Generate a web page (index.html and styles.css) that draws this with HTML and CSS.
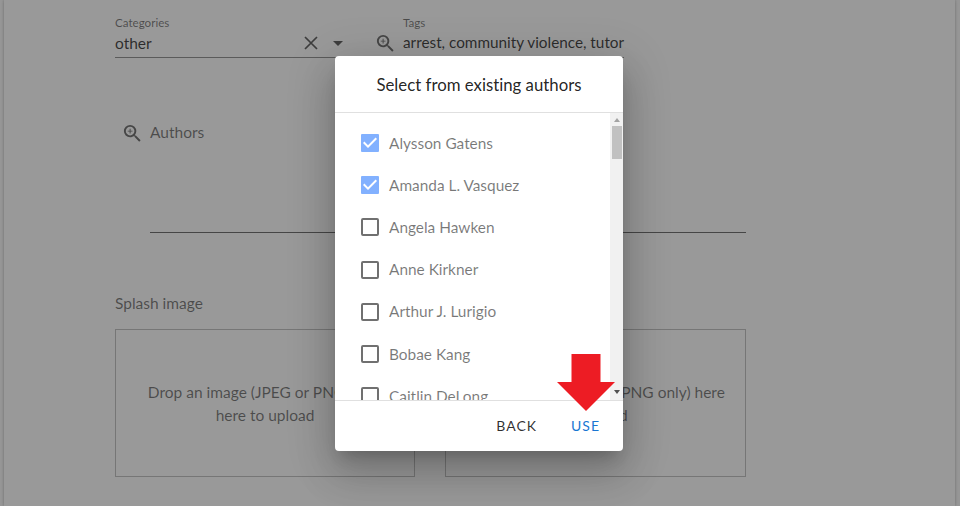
FILE: index.html
```html
<!DOCTYPE html>
<html lang="en">
<head>
<meta charset="utf-8">
<title>Select from existing authors</title>
<link rel="stylesheet" href="styles.css">
</head>
<body>
<svg class="defs" aria-hidden="true">
  <symbol id="zoom-in" viewBox="0 0 24 24"><path d="M15.5 14h-.79l-.28-.27A6.47 6.47 0 0 0 16 9.5 6.5 6.5 0 1 0 9.5 16c1.61 0 3.09-.59 4.23-1.57l.27.28v.79l5 4.99L20.49 19l-4.99-5zm-6 0C7.01 14 5 11.99 5 9.5S7.01 5 9.5 5 14 7.01 14 9.5 11.99 14 9.5 14zm2.5-4h-2v2H9v-2H7V9h2V7h1v2h2v1z"/></symbol>
  <symbol id="box-on" viewBox="3 3 18 18"><path d="M20 3H4a1 1 0 0 0-1 1v16a1 1 0 0 0 1 1h16a1 1 0 0 0 1-1V4a1 1 0 0 0-1-1zM10 17l-5-5 1.41-1.41L10 14.17l7.59-7.59L19 8l-9 9z"/></symbol>
</svg>
<main class="page">
  <div class="fields">
    <div class="field categories">
      <span class="caption">Categories</span>
      <div class="value"><span class="txt">other</span>
        <svg class="clear" viewBox="0 0 14 14"><path d="M1 1l12 12M13 1L1 13"/></svg>
        <svg class="caret" viewBox="0 0 10 5"><path d="M0 0h10L5 5z"/></svg>
      </div>
    </div>
    <svg class="icon tag-icon"><use href="#zoom-in"/></svg>
    <div class="field tags">
      <span class="caption">Tags</span>
      <div class="value"><span class="txt">arrest, community violence, tutor</span></div>
    </div>
  </div>
  <div class="authors">
    <svg class="icon"><use href="#zoom-in"/></svg>
    <div class="authors-input">Authors</div>
  </div>
  <div class="splash">Splash image</div>
  <div class="drops">
    <div class="drop"><span>Drop an image (JPEG or PNG only)</span><span>here to upload</span></div>
    <div class="drop"><span class="prompt">Drop an image (JPEG or PNG only) here</span><span>to upload</span></div>
  </div>
</main>
<div class="overlay">
  <section class="dialog">
    <h1 class="title">Select from existing authors</h1>
    <div class="body">
      <ul class="list">
        <li class="row"><svg class="check"><use href="#box-on"/></svg>Alysson Gatens</li>
        <li class="row"><svg class="check"><use href="#box-on"/></svg>Amanda L. Vasquez</li>
        <li class="row"><span class="box"></span>Angela Hawken</li>
        <li class="row"><span class="box"></span>Anne Kirkner</li>
        <li class="row"><span class="box"></span>Arthur J. Lurigio</li>
        <li class="row"><span class="box"></span>Bobae Kang</li>
        <li class="row"><span class="box"></span>Caitlin DeLong</li>
      </ul>
      <div class="scrollbar">
        <svg class="up" viewBox="0 0 6 4"><path d="M0 4h6L3 0z"/></svg>
        <div class="thumb"></div>
        <svg class="down" viewBox="0 0 6 4"><path d="M0 0h6L3 4z"/></svg>
      </div>
    </div>
    <footer class="actions"><span class="btn">BACK</span><span class="btn use">USE</span></footer>
    <svg class="arrow" viewBox="0 0 58 57"><path d="M14.5 0h29v28H58L29 57 0 28h14.5z"/></svg>
  </section>
</div>
</body>
</html>
```
FILE: styles.css
```css
* { box-sizing: border-box; }
body {
  margin: 0;
  height: 506px;
  overflow: hidden;
  background: #fafafa;
  font: 15.5px/23px Lato, sans-serif;
  font-variant-ligatures: none;
  color: rgba(0, 0, 0, .56);
}
.defs { position: absolute; width: 0; height: 0; }
.page {
  height: 506px;
  margin: 0 5px 0 4px;
  padding: 14px 209px 0 111px;
  background: #fff;
  box-shadow: 0 0 3px rgba(0, 0, 0, .3);
}
.fields { display: flex; height: 44px; }
.field { display: flex; flex-direction: column; border-bottom: 1px solid rgba(0, 0, 0, .45); }
.categories { width: 230px; }
.tags { width: 221px; margin-left: 6px; }
.caption { font-size: 11.6px; line-height: 17px; }
.value { display: flex; align-items: center; height: 24px; color: rgba(0, 0, 0, .8); white-space: nowrap; }
.tags .value { height: 23px; font-size: 15.3px; }
.txt { flex: 1; }
.clear { width: 14px; height: 14px; fill: none; stroke: #555; stroke-width: 1.7; margin-right: 15px; }
.caret { width: 10px; height: 5px; fill: #555; margin-right: 2px; }
.icon { width: 23px; height: 23px; fill: rgba(0, 0, 0, .6); flex: none; }
.tag-icon { margin: 18px 0 0 29px; }
.authors { display: flex; padding: 63px 0 0 6px; }
.authors .icon { margin-top: 1px; }
.authors-input { flex: 1; height: 112px; margin-left: 6px; border-bottom: 1px solid rgba(0, 0, 0, .6); }
.splash { margin-top: 59px; }
.drops { display: grid; grid-template-columns: 300px 301px; gap: 30px; margin-top: 14px; }
.drop {
  display: flex; flex-direction: column; align-items: center; justify-content: center;
  height: 148px; padding-top: 2px;
  border: 1px solid rgba(0, 0, 0, .25);
  white-space: nowrap;
}
.prompt { margin-right: 10px; }
.overlay {
  position: absolute; inset: 0;
  padding: 56px 0 0 335px;
  background: rgba(33, 33, 33, .46);
}
.dialog {
  position: relative;
  width: 288px; height: 395px;
  border-radius: 4px;
  background: #fff;
  box-shadow: 0 11px 15px -7px rgba(0, 0, 0, .2), 0 24px 38px 3px rgba(0, 0, 0, .14), 0 9px 46px 8px rgba(0, 0, 0, .12);
}
.title {
  height: 57px; margin: 0;
  border-bottom: 1px solid #e0e0e0;
  font-size: 16.8px; font-weight: 400; line-height: 57px;
  text-align: center;
  color: rgba(0, 0, 0, .87);
}
.body { display: flex; height: 287px; overflow: hidden; }
.list { flex: 1; margin: 0; padding: 9px 0 0 26px; list-style: none; font-size: 15.4px; color: rgba(0, 0, 0, .53); }
.row { display: flex; align-items: center; gap: 10px; height: 42.2px; }
.check { width: 18px; height: 18px; fill: #82b1ff; }
.box { width: 18px; height: 18px; border: 2px solid #707070; border-radius: 2px; }
.scrollbar {
  display: flex; flex-direction: column; align-items: center;
  width: 13px; padding-top: 5px;
  background: #f1f1f1;
}
.up, .down { width: 6px; height: 4px; flex: none; }
.up { fill: #a3a3a3; }
.down { fill: #505050; margin: auto 0 6px; }
.thumb { width: 10px; height: 33px; margin-top: 4px; background: #c1c1c1; }
.actions {
  display: flex; justify-content: flex-end; gap: 34px;
  height: 51px; padding-right: 23px;
  border-top: 1px solid #e0e0e0;
  font-size: 14px; line-height: 50px; letter-spacing: 1px;
}
.btn { color: rgba(0, 0, 0, .82); }
.use { color: #1976d2; }
.arrow { position: absolute; left: 221.5px; top: 298px; width: 58px; height: 57px; fill: #ed1c24; }
```
